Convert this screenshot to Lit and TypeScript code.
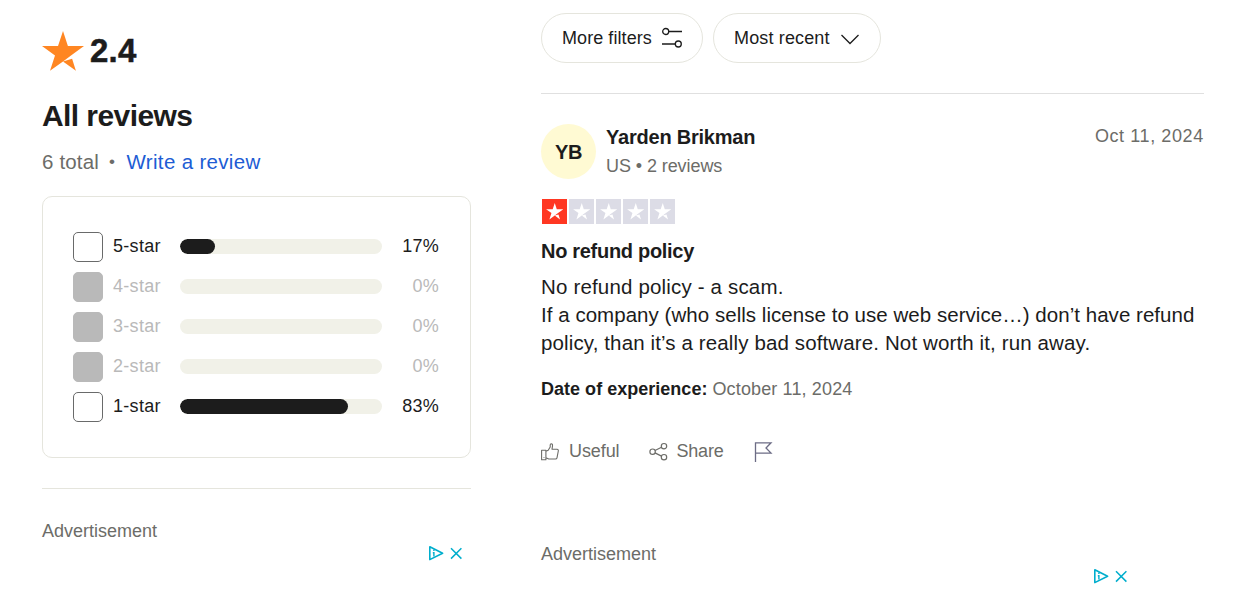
import { LitElement, html, css, nothing } from "lit";
import { customElement, property } from "lit/decorators.js";
import { classMap } from "lit/directives/class-map.js";
import { styleMap } from "lit/directives/style-map.js";

@customElement("brand-star")
class BrandStar extends LitElement {
  static styles = css`
    :host { display: block; }
    svg { display: block; width: 100%; height: 100%; fill: currentColor; }
  `;
  render() {
    return html`<svg viewBox="0 0 42 40">
      <path d="M21 0 L25.9 15.1 H42 L29 24.5 L21 30.4 L8 39.7 L13 24.5 L0 15.1 H16 Z" />
      <path d="M21 30.4 L30.1 27.7 L33.9 39.7 Z" />
    </svg>`;
  }
}

@customElement("ad-choices")
class AdChoices extends LitElement {
  static styles = css`
    :host { display: flex; justify-content: flex-end; }
    svg { display: block; width: 36px; height: 16px; fill: none; stroke: #00aecd; }
  `;
  render() {
    return html`<svg viewBox="0 0 36 16">
      <path d="M1.8 1.8 V14.6 L14.6 8.3 Z" stroke-width="1.6" stroke-linejoin="round" />
      <path d="M5.9 4.6 V6 M4.8 7.7 H5.9 V11.4" stroke-width="1.4" />
      <path d="M23 3.2 L33.4 13.6 M33.4 3.2 L23 13.6" stroke-width="1.5" />
    </svg>`;
  }
}

@customElement("rating-row")
class RatingRow extends LitElement {
  @property({ type: Number }) stars = 5;
  @property({ type: Number }) percent = 0;
  static styles = css`
    :host { display: block; }
    .row { display: flex; align-items: center; height: 40px; font-size: 18px; line-height: 20px; color: #1c1c1c; }
    .box { box-sizing: border-box; width: 30px; height: 30px; border: 1px solid #696a6a; border-radius: 5px; background: #fff; }
    .label { width: 67px; margin: -2px 0 0 10px; letter-spacing: 0.3px; }
    .track { width: 202px; height: 15px; border-radius: 8px; background: #f1f1e8; overflow: hidden; margin-top: -1px; }
    .fill { height: 100%; border-radius: 8px; background: #1c1c1c; }
    .value { flex: 1; text-align: right; margin-top: -2px; letter-spacing: 0.2px; }
    .empty { color: #b9b9b9; }
    .empty .box { background: #b9b9b9; border-color: #b9b9b9; }
  `;
  render() {
    return html`<div class=${classMap({ row: true, empty: this.percent === 0 })}>
      <span class="box"></span>
      <span class="label">${this.stars}-star</span>
      <div class="track">
        ${this.percent
          ? html`<div class="fill" style=${styleMap({ width: `${this.percent + 0.3}%` })}></div>`
          : nothing}
      </div>
      <span class="value">${this.percent}%</span>
    </div>`;
  }
}

@customElement("app-root")
class AppRoot extends LitElement {
  private ratings = [[5, 17], [4, 0], [3, 0], [2, 0], [1, 83]];

  static styles = css`
    :host {
      display: block; height: 592px; overflow: hidden; background: #fff; color: #1c1c1c;
      font-family: "Liberation Sans", Arial, Helvetica, sans-serif;
    }
    .page { display: grid; grid-template-columns: 429px 663px; column-gap: 70px; padding-left: 42px; }
    h1, h2, p { margin: 0; }
    svg { display: block; fill: none; stroke: currentColor; }
    .side { display: flex; flex-direction: column; padding-top: 30px; }
    .score { display: flex; align-items: center; height: 41px; gap: 6px; }
    .score brand-star { width: 42px; height: 40px; color: #ff8622; }
    .number { font-size: 33px; font-weight: 700; line-height: 40px; letter-spacing: 0.2px; -webkit-text-stroke: 0.5px currentColor; }
    h1 { font-size: 30px; line-height: 36px; margin-top: 27px; letter-spacing: -0.58px; white-space: nowrap; }
    .summary { display: flex; height: 24px; margin-top: 16px; line-height: 24px; font-size: 20.5px; color: #6c6c68; white-space: nowrap; }
    .total { width: 67px; letter-spacing: 0.17px; }
    .dot { width: 17.5px; font-size: 17px; }
    .write { color: #205cd4; letter-spacing: 0.33px; }
    .card { box-sizing: border-box; height: 262px; margin-top: 22px; padding: 30px 31px 30px 30px; border: 1px solid #e5e5dd; border-radius: 10px; }
    .side-rule { height: 1px; margin-top: 30px; background: #e5e5dd; }
    .ad { font-size: 18px; line-height: 20px; color: #6c6c68; white-space: nowrap; }
    .side .ad { margin-top: 32px; }
    .side ad-choices { margin: 4px 7px 0 0; }
    .main { display: flex; flex-direction: column; padding-top: 13px; }
    .pills { display: flex; gap: 10px; }
    .pill { box-sizing: border-box; display: flex; align-items: center; height: 50px; padding: 0 20px; border: 1px solid #e5e5dd; border-radius: 25px; font-size: 18px; white-space: nowrap; justify-content: space-between; }
    .filters { width: 162px; letter-spacing: 0.07px; }
    .sort { width: 168px; letter-spacing: 0.15px; }
    .pill svg { width: 20px; height: 22px; }
    .main-rule { height: 1px; margin-top: 30px; background: #e0e0e0; }
    .author { display: flex; margin-top: 30px; }
    .avatar { width: 55px; height: 55px; border-radius: 50%; background: #fffad3; text-align: center; font-size: 20px; font-weight: 700; line-height: 56px; letter-spacing: -0.3px; }
    .who { margin-left: 10px; flex: 1; white-space: nowrap; }
    .name { font-size: 20px; font-weight: 700; line-height: 26px; letter-spacing: -0.22px; }
    .meta { margin-top: 4px; font-size: 18px; line-height: 24px; letter-spacing: -0.08px; color: #6c6c68; }
    .date { font-size: 18px; line-height: 24px; letter-spacing: 0.6px; margin-right: 0.2px; color: #6c6c68; }
    .stars { display: flex; gap: 2px; margin: 20px 0 0 1px; }
    .tile { display: grid; place-items: center; width: 25px; height: 25px; background: #dcdce6; color: #fff; }
    .tile.on { background: #ff3722; }
    .tile brand-star { width: 17.5px; height: 16.5px; }
    h2 { font-size: 20px; line-height: 26px; margin-top: 14px; letter-spacing: -0.3px; white-space: nowrap; }
    .text { font-size: 20.5px; line-height: 28px; margin-top: 9px; white-space: nowrap; }
    .line { display: block; }
    .l1 { letter-spacing: 0.17px; }
    .l2 { letter-spacing: 0.04px; }
    .l3 { letter-spacing: 0.125px; }
    .experience { margin-top: 20px; font-size: 18px; line-height: 24px; color: #6c6c68; white-space: nowrap; }
    .experience b { color: #1c1c1c; letter-spacing: 0.02px; }
    .when { letter-spacing: 0.14px; }
    .actions { display: flex; align-items: center; height: 24px; margin-top: 38px; font-size: 18px; letter-spacing: -0.08px; color: #6c6c68; }
    .actions svg { width: 20px; height: 20px; margin-top: 2px; }
    .useful { width: 79.5px; margin-left: 8px; }
    .share { width: 77.5px; margin-left: 8px; letter-spacing: -0.2px; }
    .actions .flag { color: #6c6c85; }
    .main .ad { margin-top: 81px; }
    .main ad-choices { margin: 4px 75px 0 0; }
  `;

  render() {
    return html`<div class="page">
      <section class="side">
        <div class="score"><brand-star></brand-star><span class="number">2.4</span></div>
        <h1>All reviews</h1>
        <div class="summary">
          <span class="total">6 total</span><span class="dot">•</span><span class="write">Write a review</span>
        </div>
        <div class="card">
          ${this.ratings.map(([s, p]) => html`<rating-row .stars=${s} .percent=${p}></rating-row>`)}
        </div>
        <div class="side-rule"></div>
        <p class="ad">Advertisement</p>
        <ad-choices></ad-choices>
      </section>
      <section class="main">
        <div class="pills">
          <div class="pill filters"><span>More filters</span>
            <svg viewBox="0 0 20 22" stroke-width="1.3">
              <circle cx="3.7" cy="4.5" r="3" /><path d="M6.7 4.5 H20 M0 17 H13.3" /><circle cx="16.3" cy="17" r="3" />
            </svg>
          </div>
          <div class="pill sort"><span>Most recent</span>
            <svg viewBox="0 0 20 22" stroke-width="1.3"><path d="M1.5 8 L10 16.5 L18.5 8" /></svg>
          </div>
        </div>
        <div class="main-rule"></div>
        <div class="author">
          <div class="avatar">YB</div>
          <div class="who"><div class="name">Yarden Brikman</div><div class="meta">US • 2 reviews</div></div>
          <span class="date">Oct 11, 2024</span>
        </div>
        <div class="stars">
          ${[1, 2, 3, 4, 5].map((n) => html`<span class=${classMap({ tile: true, on: n === 1 })}><brand-star></brand-star></span>`)}
        </div>
        <h2>No refund policy</h2>
        <p class="text">
          <span class="line l1">No refund policy - a scam.</span>
          <span class="line l2">If a company (who sells license to use web service…) don’t have refund</span>
          <span class="line l3">policy, than it’s a really bad software. Not worth it, run away.</span>
        </p>
        <p class="experience"><b>Date of experience:</b> <span class="when">October 11, 2024</span></p>
        <div class="actions">
          <svg viewBox="0 0 20 20" stroke-width="1.1" stroke-linejoin="round">
            <path d="M0.6 8.2 H4.9 V17.8 H0.6 Z M4.9 9.2 L7.2 8.2 L9.2 5 V3 Q9.2 1.7 10.3 1.7 Q11.7 1.8 11.5 4 L11 7.2 H16 Q17.6 7.3 17.3 9 L16 15.8 Q15.7 17 14.5 17 H7.8 L4.9 15.8" />
            <path d="M2.6 15.5 h.8" />
          </svg>
          <span class="useful">Useful</span>
          <svg viewBox="0 0 20 20" stroke-width="1.2">
            <circle cx="3.6" cy="9.7" r="2.7" /><circle cx="15" cy="4.2" r="2.7" /><circle cx="15" cy="15.2" r="2.7" />
            <path d="M6 8.5 L12.5 5.3 M6 10.9 L12.5 14.1" />
          </svg>
          <span class="share">Share</span>
          <svg class="flag" viewBox="0 0 20 20" stroke-width="1.3"><path d="M1.5 20 V0.8 H17 L12 6 L17 11.1 H1.5" /></svg>
        </div>
        <p class="ad">Advertisement</p>
        <ad-choices></ad-choices>
      </section>
    </div>`;
  }
}
